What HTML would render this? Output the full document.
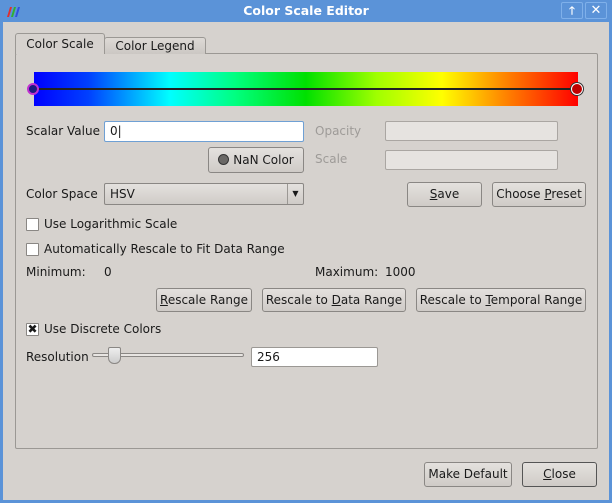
<!DOCTYPE html>
<html><head><meta charset="utf-8"><style>
*{box-sizing:border-box;margin:0;padding:0}
body{width:612px;height:503px;overflow:hidden;background:#5b93d8;font-family:"DejaVu Sans","Liberation Sans",sans-serif;font-size:12px;color:#1a1a1a;position:relative}
.a{position:absolute}
#win{left:3px;top:22px;width:606px;height:478px;background:#d6d2ce}
.title{left:0;top:0;width:612px;height:22px;text-align:center;line-height:22px;color:#fff;font-weight:bold;font-size:12.5px}
.btn{position:absolute;border:1px solid #8a8784;border-radius:3px;background:linear-gradient(#e4e1de,#cfcbc7);text-align:center;line-height:23px;color:#1a1a1a;white-space:nowrap}
.inp{position:absolute;border:1px solid #9b9894;border-radius:2px;background:#fff;padding-left:5px;line-height:18px}
.dis{background:#e6e3e0;border-color:#aaa6a2}
.cb{position:absolute;width:13px;height:13px;border:1px solid #8a8784;background:#fff;border-radius:1px}
.g{color:#9e9b98}
u{text-decoration:underline}
</style></head><body>
<div class="a title">Color Scale Editor</div>
<div class="a" style="left:6px;top:6px;width:14px;height:10px">
<svg width="14" height="10"><path d="M1 10L4 0h2L3 10z" fill="#e03030"/><path d="M5 10L8 0h2L7 10z" fill="#30b030"/><path d="M9 10L12 0h2L11 10z" fill="#3050e0"/></svg></div>
<div class="a" style="left:561px;top:2px;width:22px;height:17px;border:1px solid #7fb0ea;border-radius:2px;color:#fff;text-align:center;line-height:15px;font-weight:bold;font-size:11px">🡑</div>
<div class="a" style="left:585px;top:2px;width:22px;height:17px;border:1px solid #7fb0ea;border-radius:2px;color:#fff;text-align:center;line-height:15px;font-weight:bold;font-size:13px">✕</div>
<div class="a" id="win"></div>
<!-- tab pane -->
<div class="a" style="left:15px;top:53px;width:583px;height:396px;border:1px solid #9b9894;border-radius:2px;background:#d6d2ce"></div>
<div class="a" style="left:104px;top:37px;width:102px;height:17px;border:1px solid #9b9894;border-bottom:none;border-radius:3px 3px 0 0;background:linear-gradient(#dedad6,#cbc7c3);text-align:center;line-height:17px">Color Legend</div>
<div class="a" style="left:15px;top:33px;width:90px;height:21px;border:1px solid #9b9894;border-bottom:none;border-radius:3px 3px 0 0;background:#d6d2ce;text-align:center;line-height:20px">Color Scale</div>
<!-- gradient -->
<div class="a" style="left:34px;top:72px;width:544px;height:34px;background:linear-gradient(90deg,#0000ff 0%,#0040ff 10%,#00ffff 25%,#00ff80 37%,#00e000 50%,#a0ff00 63%,#ffff00 75%,#ff8000 87%,#ff0000 100%)"></div>
<div class="a" style="left:34px;top:88px;width:544px;height:2px;background:#222"></div>
<div class="a" style="left:27px;top:83px;width:12px;height:12px;border-radius:50%;background:#1a1a80;border:2px solid #c030d0"></div>
<div class="a" style="left:571px;top:83px;width:12px;height:12px;border-radius:50%;background:#c00000;border:1.5px solid #fff;box-shadow:0 0 0 1px #333"></div>
<!-- row 1 -->
<div class="a" style="left:26px;top:124px">Scalar Value</div>
<div class="inp" style="left:104px;top:121px;width:200px;height:21px;border-color:#6fa0d4;line-height:19px">0|</div>
<div class="a g" style="left:315px;top:124px">Opacity</div>
<div class="inp dis" style="left:385px;top:121px;width:173px;height:20px"></div>
<!-- row 2 -->
<div class="btn" style="left:208px;top:147px;width:96px;height:26px;line-height:24px"><span style="display:inline-block;width:11px;height:11px;border-radius:50%;background:#6a6866;border:1px solid #333;vertical-align:-1px;margin-right:4px"></span>NaN Color</div>
<div class="a g" style="left:315px;top:152px">Scale</div>
<div class="inp dis" style="left:385px;top:150px;width:173px;height:20px"></div>
<!-- row 3 -->
<div class="a" style="left:26px;top:187px">Color Space</div>
<div class="btn" style="left:104px;top:183px;width:200px;height:22px;text-align:left;padding-left:5px;line-height:20px;border-radius:2px">HSV<span style="position:absolute;right:0;top:0;width:16px;height:20px;border-left:1px solid #9b9894;text-align:center;font-size:8px">▼</span></div>
<div class="btn" style="left:407px;top:182px;width:75px;height:25px"><u>S</u>ave</div>
<div class="btn" style="left:492px;top:182px;width:94px;height:25px">Choose <u>P</u>reset</div>
<!-- checkboxes -->
<div class="cb" style="left:26px;top:218px"></div>
<div class="a" style="left:44px;top:217px">Use Logarithmic Scale</div>
<div class="cb" style="left:26px;top:243px"></div>
<div class="a" style="left:44px;top:242px">Automatically Rescale to Fit Data Range</div>
<div class="a" style="left:26px;top:265px">Minimum:</div>
<div class="a" style="left:104px;top:265px">0</div>
<div class="a" style="left:315px;top:265px">Maximum:</div>
<div class="a" style="left:385px;top:265px">1000</div>
<div class="btn" style="left:156px;top:288px;width:96px;height:24px"><u>R</u>escale Range</div>
<div class="btn" style="left:262px;top:288px;width:144px;height:24px">Rescale to <u>D</u>ata Range</div>
<div class="btn" style="left:416px;top:288px;width:170px;height:24px">Rescale to <u>T</u>emporal Range</div>
<div class="cb" style="left:26px;top:323px;font-size:12px;line-height:11px;text-align:center;font-weight:bold">✖</div>
<div class="a" style="left:44px;top:322px">Use Discrete Colors</div>
<div class="a" style="left:26px;top:350px">Resolution</div>
<div class="a" style="left:92px;top:353px;width:152px;height:4px;border:1px solid #8a8784;border-radius:2px;background:#e8e5e2"></div>
<div class="a" style="left:108px;top:347px;width:13px;height:17px;border:1px solid #8a8784;border-radius:2px 2px 6px 6px;background:linear-gradient(#eee,#ccc)"></div>
<div class="inp" style="left:251px;top:347px;width:127px;height:20px">256</div>
<!-- bottom -->
<div class="btn" style="left:424px;top:462px;width:88px;height:25px">Make Default</div>
<div class="btn" style="left:522px;top:462px;width:75px;height:25px;border-color:#555"><u>C</u>lose</div>
</body></html>
